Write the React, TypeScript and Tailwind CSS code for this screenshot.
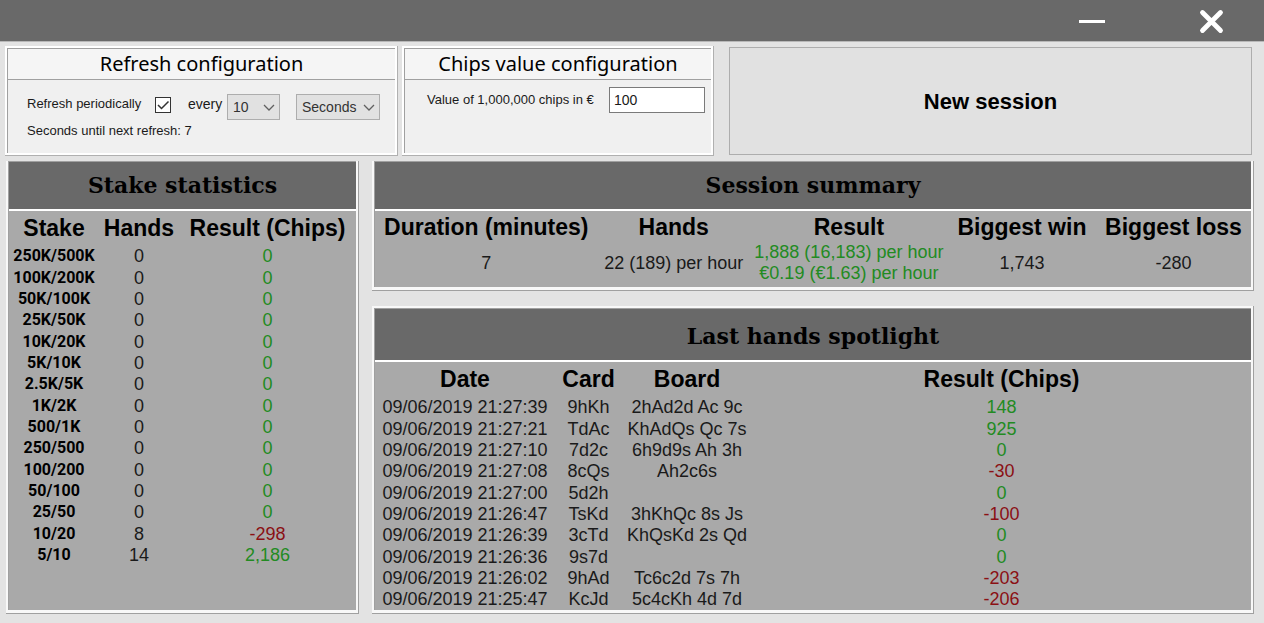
import { useState, type ReactNode } from "react";

const stakes: [string, number, number][] = [
  ["250K/500K", 0, 0],
  ["100K/200K", 0, 0],
  ["50K/100K", 0, 0],
  ["25K/50K", 0, 0],
  ["10K/20K", 0, 0],
  ["5K/10K", 0, 0],
  ["2.5K/5K", 0, 0],
  ["1K/2K", 0, 0],
  ["500/1K", 0, 0],
  ["250/500", 0, 0],
  ["100/200", 0, 0],
  ["50/100", 0, 0],
  ["25/50", 0, 0],
  ["10/20", 8, -298],
  ["5/10", 14, 2186],
];

const hands: [string, string, string, number][] = [
  ["09/06/2019 21:27:39", "9hKh", "2hAd2d Ac 9c", 148],
  ["09/06/2019 21:27:21", "TdAc", "KhAdQs Qc 7s", 925],
  ["09/06/2019 21:27:10", "7d2c", "6h9d9s Ah 3h", 0],
  ["09/06/2019 21:27:08", "8cQs", "Ah2c6s", -30],
  ["09/06/2019 21:27:00", "5d2h", "", 0],
  ["09/06/2019 21:26:47", "TsKd", "3hKhQc 8s Js", -100],
  ["09/06/2019 21:26:39", "3cTd", "KhQsKd 2s Qd", 0],
  ["09/06/2019 21:26:36", "9s7d", "", 0],
  ["09/06/2019 21:26:02", "9hAd", "Tc6c2d 7s 7h", -203],
  ["09/06/2019 21:25:47", "KcJd", "5c4cKh 4d 7d", -206],
];

const resultColor = (n: number) => (n < 0 ? "text-[#8b1014]" : "text-[#228b22]");

function ConfigPanel({ title, children }: { title: string; children: ReactNode }) {
  return (
    <section className="flex border-r border-b border-[#b0b0b0] bg-white p-[2px]">
      <div className="grow border-t border-l border-[#a0a0a0] bg-[#f0f0f0]">
        <h2 className="border-b border-[#a0a0a0] bg-[#f5f5f5] text-center font-['Noto_Sans',sans-serif] text-[20px] leading-[30px] text-black">
          {title}
        </h2>
        {children}
      </div>
    </section>
  );
}

function StatsPanel({
  title,
  className,
  titleClassName,
  children,
}: {
  title: string;
  className: string;
  titleClassName: string;
  children: ReactNode;
}) {
  return (
    <section className={`flex border-r border-b border-[#a0a0a0] bg-[#f8f8f8] pr-[2px] pb-[3px] pl-[2px] ${className}`}>
      <div className="flex grow flex-col border-t border-l border-[#a0a0a0] bg-[#a9a9a9]">
        <h2
          className={`border-b-2 border-white bg-[#696969] text-center font-['DejaVu_Serif',serif] text-[22px] font-bold text-black ${titleClassName}`}
        >
          {title}
        </h2>
        {children}
      </div>
    </section>
  );
}

function Dropdown({ label, options, className }: { label: string; options: string[]; className: string }) {
  return (
    <div className={`relative ${className}`}>
      <select
        aria-label={label}
        className="h-[26px] w-full appearance-none border border-[#adadad] bg-[#e1e1e1] pl-[5px] text-[14px] text-[#333333]"
      >
        {options.map((o) => (
          <option key={o}>{o}</option>
        ))}
      </select>
      <svg className="pointer-events-none absolute top-[10px] right-[5px]" width="12" height="8" viewBox="0 0 12 8" fill="none" stroke="#606060" strokeWidth="1.3">
        <path d="M1 1l5 5 5-5" />
      </svg>
    </div>
  );
}

export default function App() {
  const [periodic, setPeriodic] = useState(true);
  const th = "text-[23px] font-bold whitespace-nowrap text-black px-0";
  return (
    <div className="flex min-h-screen flex-col bg-[#e3e3e3] font-['Liberation_Sans',Arial,sans-serif] text-[#1a1a1a]">
      <header className="flex h-[42px] items-center justify-end gap-[92px] border-b border-[#b8b8b8] bg-[#696969] pr-[38px]">
        <button aria-label="Minimize" className="flex h-8 items-center">
          <svg width="28" height="28" viewBox="0 0 28 28" stroke="#fff" strokeWidth="3">
            <path d="M1 14.5h26" />
          </svg>
        </button>
        <button aria-label="Close" className="flex h-8 items-center">
          <svg width="28" height="28" viewBox="0 0 28 28" stroke="#fff" strokeWidth="4.8" strokeLinecap="round" fill="none">
            <path d="M4.500 5.500l18 18M22.500 5.500l-18 18" />
          </svg>
        </button>
      </header>

      <main className="flex grow flex-col gap-[5px] pt-1 pb-[10px]">
        <div className="grid grid-cols-[393px_316px_1fr] pr-3 pl-[5px]">
          <ConfigPanel title="Refresh configuration">
            <div className="flex h-[73px] flex-col gap-px pt-[14px] pl-[19px] text-[13px] leading-5">
              <div className="flex items-start">
                <label htmlFor="periodic" className="w-[128px]">
                  Refresh periodically
                </label>
                <div className="relative mt-[3px] mr-[17px] size-4">
                  <input
                    id="periodic"
                    type="checkbox"
                    checked={periodic}
                    onChange={(e) => setPeriodic(e.target.checked)}
                    className="block size-4 appearance-none border border-[#333333] bg-white"
                  />
                  {periodic && (
                    <svg className="pointer-events-none absolute inset-0" width="16" height="16" viewBox="0 0 16 16" fill="none" stroke="#333" strokeWidth="1.5">
                      <path d="M3 8l3.500 3.500L13.500 4.500" />
                    </svg>
                  )}
                </div>
                <span className="w-[39px] text-[14px]">every</span>
                <Dropdown label="Refresh interval" options={["10", "20", "30"]} className="mr-4 w-[53px]" />
                <Dropdown label="Interval unit" options={["Seconds", "Minutes"]} className="w-[84px]" />
              </div>
              <p>Seconds until next refresh: 7</p>
            </div>
          </ConfigPanel>
          <div className="ml-1 flex flex-col *:grow">
            <ConfigPanel title="Chips value configuration">
              <div className="flex items-center pt-[7px] pr-[6px] pl-[22px] text-[13px]">
                <label htmlFor="chips" className="grow whitespace-nowrap">
                  Value of 1,000,000 chips in €
                </label>
                <input
                  id="chips"
                  defaultValue="100"
                  className="h-[26px] w-[96px] border border-[#7a7a7a] bg-white pl-1 text-[14px]"
                />
              </div>
            </ConfigPanel>
          </div>
          <button className="mt-px mb-px ml-[15px] border border-[#adadad] bg-[#e1e1e1] text-[22px] font-bold text-black">
            New session
          </button>
        </div>

        <div className="grid grow grid-cols-[353px_1fr] gap-x-[13px] pr-[10px] pl-[6px]">
          <StatsPanel title="Stake statistics" className="" titleClassName="leading-[47px]">
            <table className="w-full table-fixed border-collapse text-center text-[18px] leading-5">
              <thead>
                <tr className="h-[34px]">
                  <th className={`${th} w-[90px]`}>Stake</th>
                  <th className={`${th} w-[80px]`}>Hands</th>
                  <th className={th}>Result (Chips)</th>
                </tr>
              </thead>
              <tbody>
                {stakes.map(([name, count, result]) => (
                  <tr key={name} className="h-[21px] nth-[3n+1]:h-[22px]">
                    <th className="p-0 font-['Roboto',sans-serif] text-[16px] font-bold text-black">{name}</th>
                    <td className="p-0">{count}</td>
                    <td className={`p-0 ${resultColor(result)}`}>{result.toLocaleString("en-US")}</td>
                  </tr>
                ))}
              </tbody>
            </table>
          </StatsPanel>

          <div className="flex flex-col gap-[15px]">
            <StatsPanel title="Session summary" className="" titleClassName="leading-[47px]">
              <table className="mb-[3px] w-full table-fixed border-collapse text-center text-[18px] leading-[21px] whitespace-nowrap">
                <thead>
                  <tr className="h-[31px] align-bottom">
                    <th className={`${th} w-[25.4%] pb-1`}>Duration (minutes)</th>
                    <th className={`${th} w-[17.4%] pb-1`}>Hands</th>
                    <th className={`${th} w-[22.6%] pb-1`}>Result</th>
                    <th className={`${th} w-[16.9%] pb-1`}>Biggest win</th>
                    <th className={`${th} pb-1`}>Biggest loss</th>
                  </tr>
                </thead>
                <tbody>
                  <tr>
                    <td className="p-0">7</td>
                    <td className="p-0">22 (189) per hour</td>
                    <td className="p-0 text-[#228b22]">
                      1,888 (16,183) per hour
                      <br />
                      €0.19 (€1.63) per hour
                    </td>
                    <td className="p-0">1,743</td>
                    <td className="p-0">-280</td>
                  </tr>
                </tbody>
              </table>
            </StatsPanel>

            <StatsPanel title="Last hands spotlight" className="grow pt-[2px]" titleClassName="pt-[3px] leading-[48px]">
              <table className="w-full table-fixed border-collapse text-center text-[18px] leading-5 whitespace-nowrap">
                <thead>
                  <tr className="h-[34px]">
                    <th className={`${th} w-[180px]`}>Date</th>
                    <th className={`${th} w-[67px]`}>Card</th>
                    <th className={`${th} w-[130px]`}>Board</th>
                    <th className={th}>Result (Chips)</th>
                  </tr>
                </thead>
                <tbody>
                  {hands.map(([date, card, board, result]) => (
                    <tr key={date} className="h-[21px] nth-[3n+1]:h-[22px]">
                      <td className="p-0">{date}</td>
                      <td className="p-0">{card}</td>
                      <td className="p-0">{board}</td>
                      <td className={`p-0 ${resultColor(result)}`}>{result}</td>
                    </tr>
                  ))}
                </tbody>
              </table>
            </StatsPanel>
          </div>
        </div>
      </main>
    </div>
  );
}
